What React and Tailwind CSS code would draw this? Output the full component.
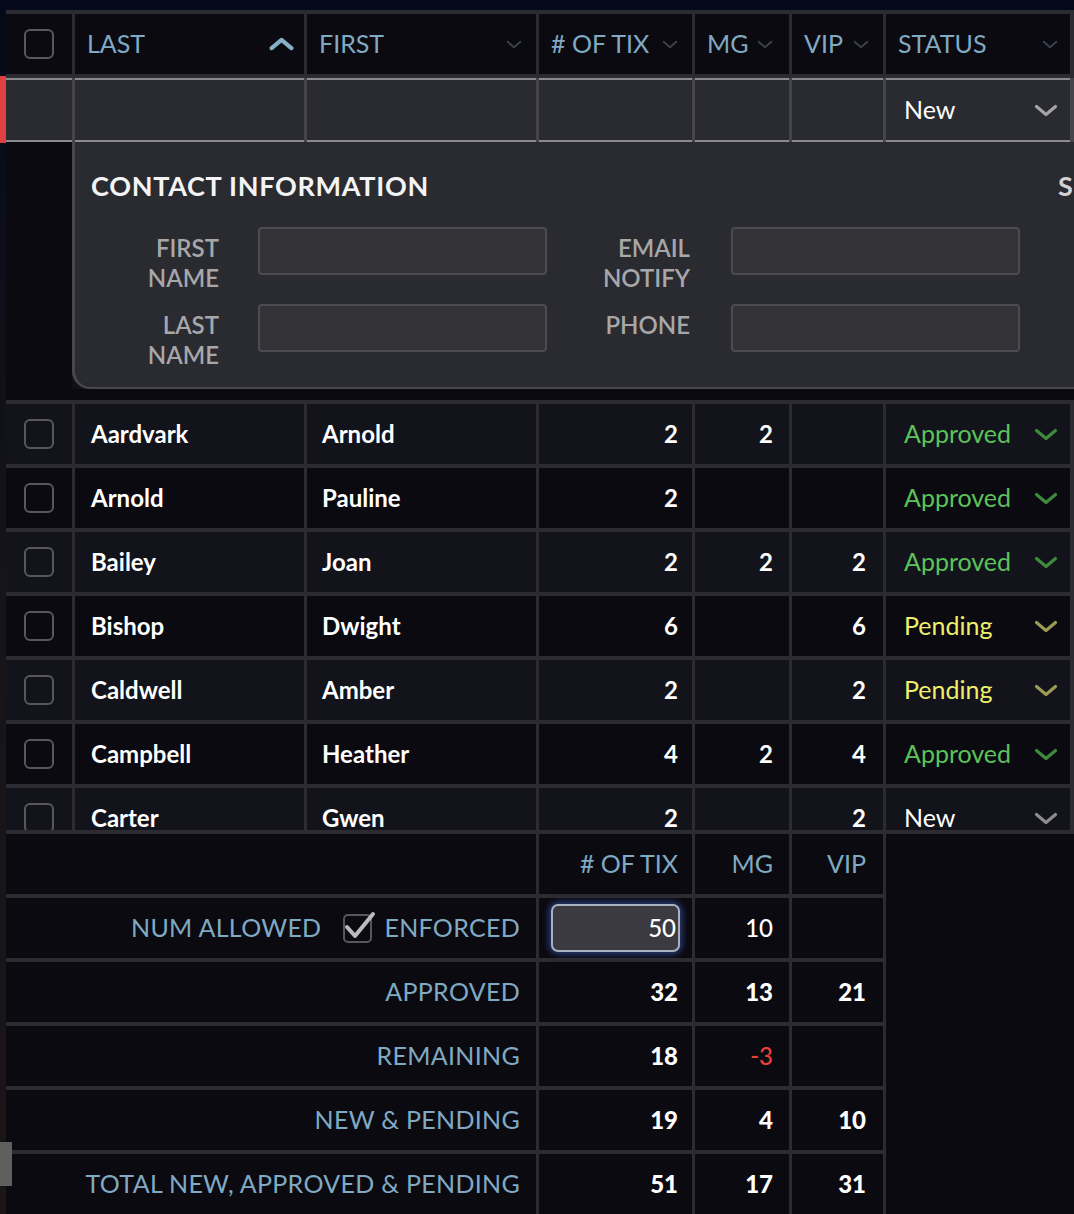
import React from 'react'

const GRID = 'grid grid-cols-[66px_229px_229px_153px_94px_91px_184px] gap-x-[3px]'

const rows = [
  { last: 'Aardvark', first: 'Arnold', tix: 2, mg: 2, vip: '', status: 'Approved' },
  { last: 'Arnold', first: 'Pauline', tix: 2, mg: '', vip: '', status: 'Approved' },
  { last: 'Bailey', first: 'Joan', tix: 2, mg: 2, vip: 2, status: 'Approved' },
  { last: 'Bishop', first: 'Dwight', tix: 6, mg: '', vip: 6, status: 'Pending' },
  { last: 'Caldwell', first: 'Amber', tix: 2, mg: '', vip: 2, status: 'Pending' },
  { last: 'Campbell', first: 'Heather', tix: 4, mg: 2, vip: 4, status: 'Approved' },
  { last: 'Carter', first: 'Gwen', tix: 2, mg: '', vip: 2, status: 'New' },
]

const statusStyle = {
  Approved: { text: 'text-[#5cc35a]', chev: '#3e8b3f' },
  Pending: { text: 'text-[#eef06c]', chev: '#9c9a55' },
  New: { text: 'text-white', chev: '#8d8d8d' },
}

function Chevron({ color, up = false, w = 24, h = 13, sw = 3.2 }) {
  return (
    <svg width={w} height={h} viewBox="0 0 24 13" fill="none" stroke={color} strokeWidth={sw} strokeLinecap="round" strokeLinejoin="round">
      <polyline points={up ? '2.5,10.5 12,2.5 21.5,10.5' : '2.5,2.5 12,10.5 21.5,2.5'} />
    </svg>
  )
}

const Box = () => <div className="h-[30px] w-[30px] rounded-[6px] border-2 border-[#57575d]" />

function HeadCell({ label, up, className = '' }) {
  return (
    <div className={`flex h-[60px] items-center justify-between bg-[#0b0a11] pl-[12px] text-[25px] text-[#80a9c2] ${className}`}>
      <span>{label}</span>
      {up ? <Chevron color="#86aec6" up w={25} h={14} sw={4} /> : <Chevron color="#3a404e" w={16} h={9} sw={3} />}
    </div>
  )
}

function FieldRow({ a, b }) {
  return (
    <div className="flex items-start">
      <div className="mt-[6px] w-[128px] text-right text-[24px] font-semibold leading-[30px] text-[#a7a7a9]">
        {a.map(l => <div key={l}>{l}</div>)}
      </div>
      <div className="ml-[39px] h-[48px] w-[289px] rounded-[4px] border-2 border-[#4b4b51] bg-[#323237]" />
      <div className="mt-[6px] w-[143px] text-right text-[24px] font-semibold leading-[30px] text-[#a7a7a9]">
        {b.map(l => <div key={l}>{l}</div>)}
      </div>
      <div className="ml-[41px] h-[48px] w-[289px] rounded-[4px] border-2 border-[#4b4b51] bg-[#323237]" />
    </div>
  )
}

const footRows = [
  { label: 'APPROVED', tix: '32', mg: '13', vip: '21' },
  { label: 'REMAINING', tix: '18', mg: '-3', vip: '' },
  { label: 'NEW & PENDING', tix: '19', mg: '4', vip: '10' },
  { label: 'TOTAL NEW, APPROVED & PENDING', tix: '51', mg: '17', vip: '31' },
]

const footLabel = 'flex h-[60px] items-center justify-end bg-[#0b0a11] pr-[16px] text-[25px] tracking-[0.3px] text-[#80a9c2]'

export default function App() {
  return (
    <div className="relative h-[1214px] w-[1074px] overflow-hidden bg-linear-to-b from-[#050a1a] via-[#171419] via-50% to-[#1b1518] pl-[6px] pt-[10px] font-['Lato',sans-serif]">
      {/* header */}
      <div className={`${GRID} border-y-4 border-[#2c2b31] bg-[#2c2b31] pr-[4px]`}>
        <div className="flex h-[60px] items-center justify-center bg-[#0b0a11]"><Box /></div>
        <HeadCell label="LAST" up className="pr-[10px]" />
        <HeadCell label="FIRST" className="pr-[14px]" />
        <HeadCell label="# OF TIX" className="pr-[14px]" />
        <HeadCell label="MG" className="pr-[16px]" />
        <HeadCell label="VIP" className="pr-[14px]" />
        <HeadCell label="STATUS" className="pl-[10px] pr-[12px]" />
      </div>

      {/* scroll area */}
      <div className="h-[752px] overflow-hidden">
        {/* selected row */}
        <div className={`${GRID} bg-[#45454b] pr-[4px]`}>
          {[0, 1, 2, 3, 4, 5].map(i => (
            <div key={i} className="h-[64px] border-y-2 border-[#8a8a8f] bg-[#2a2a31]" />
          ))}
          <div className="flex h-[64px] items-center justify-between border-y-2 border-[#8a8a8f] bg-[#2a2a31] pl-[18px] pr-[12px]">
            <span className="text-[25px] text-white">New</span>
            <Chevron color="#a5a5a5" />
          </div>
        </div>

        {/* contact panel */}
        <div className="flex">
          <div className="w-[66px] shrink-0 bg-[#0b0a11]" />
          <div className="flex h-[247px] min-w-0 flex-1 overflow-hidden rounded-bl-[18px] border-b-2 border-l-[3px] border-[#47474d] bg-[#2a2a31] pl-[16px] pt-[30px]">
            <div className="w-[929px] shrink-0">
              <h2 className="text-[27px] font-bold leading-none tracking-[0.7px] text-[#f4f4f4]">CONTACT INFORMATION</h2>
              <div className="mt-[28px] flex flex-col gap-[11px]">
                <FieldRow a={['FIRST', 'NAME']} b={['EMAIL', 'NOTIFY']} />
                <FieldRow a={['LAST', 'NAME']} b={['PHONE']} />
              </div>
            </div>
            <h2 className="ml-[38px] shrink-0 text-[27px] font-bold leading-none tracking-[0.7px] text-[#d2d2d4]">SETTINGS</h2>
          </div>
        </div>
        <div className="h-[11px] bg-[#0b0a11]" />

        {/* rows */}
        <div className="flex h-[430px] flex-col gap-[4px] overflow-hidden border-t-4 border-[#2c2b31] bg-[#2c2b31]">
          {rows.map((r, i) => {
            const bg = i % 2 === 0 ? 'bg-[#13131b]' : 'bg-[#0b0a11]'
            const st = statusStyle[r.status]
            return (
              <div key={r.last} className={`${GRID} shrink-0 pr-[4px] text-[24px] text-white`}>
                <div className={`flex h-[60px] items-center justify-center ${bg}`}><Box /></div>
                <div className={`flex h-[60px] items-center pl-[16px] font-bold ${bg}`}>{r.last}</div>
                <div className={`flex h-[60px] items-center pl-[15px] font-bold ${bg}`}>{r.first}</div>
                <div className={`flex h-[60px] items-center justify-end pr-[14px] font-bold ${bg}`}>{r.tix}</div>
                <div className={`flex h-[60px] items-center justify-end pr-[16px] font-bold ${bg}`}>{r.mg}</div>
                <div className={`flex h-[60px] items-center justify-end pr-[17px] font-bold ${bg}`}>{r.vip}</div>
                <div className={`flex h-[60px] items-center justify-between pl-[18px] pr-[12px] ${bg}`}>
                  <span className={`text-[25px] ${st.text}`}>{r.status}</span>
                  <Chevron color={st.chev} />
                </div>
              </div>
            )
          })}
        </div>
      </div>

      {/* totals */}
      <div className="flex border-t-4 border-[#2c2b31]">
        <div className="grid grid-cols-[530px_153px_94px_91px] gap-x-[3px] gap-y-[4px] bg-[#2c2b31] pr-[3px] text-[24px]">
          <div className="h-[60px] bg-[#0b0a11]" />
          <div className="flex h-[60px] items-center justify-end bg-[#0b0a11] pr-[14px] text-[25px] text-[#80a9c2]"># OF TIX</div>
          <div className="flex h-[60px] items-center justify-end bg-[#0b0a11] pr-[16px] text-[25px] text-[#80a9c2]">MG</div>
          <div className="flex h-[60px] items-center justify-end bg-[#0b0a11] pr-[17px] text-[25px] text-[#80a9c2]">VIP</div>

          <div className={footLabel}>
            <span>NUM ALLOWED</span>
            <div className="relative ml-[22px] h-[29px] w-[29px] rounded-[5px] border-2 border-[#56565c]">
              <svg className="absolute -right-[7px] -top-[5px]" width="34" height="30" viewBox="0 0 34 30" fill="none" stroke="#bcbcbc" strokeWidth="4" strokeLinecap="round" strokeLinejoin="round">
                <polyline points="4,16 12,25 30,3" />
              </svg>
            </div>
            <span className="ml-[12px]">ENFORCED</span>
          </div>
          <div className="flex h-[60px] items-center bg-[#0b0a11] px-[12px]">
            <div className="flex h-[48px] w-full items-center justify-end rounded-[7px] border-2 border-[#a9b0c0] bg-[#3b3a41] pr-[2px] font-medium text-white shadow-[0_0_6px_2px_rgba(70,110,210,0.55)]">50</div>
          </div>
          <div className="flex h-[60px] items-center justify-end bg-[#0b0a11] pr-[16px] font-medium text-white">10</div>
          <div className="h-[60px] bg-[#0b0a11]" />

          {footRows.map(f => (
            <React.Fragment key={f.label}>
              <div className={footLabel}>{f.label}</div>
              <div className="flex h-[60px] items-center justify-end bg-[#0b0a11] pr-[14px] font-black text-white">{f.tix}</div>
              <div className={`flex h-[60px] items-center justify-end bg-[#0b0a11] pr-[16px] ${f.mg.startsWith('-') ? 'font-medium text-[#e8413c]' : 'font-black text-white'}`}>{f.mg}</div>
              <div className="flex h-[60px] items-center justify-end bg-[#0b0a11] pr-[17px] font-black text-white">{f.vip}</div>
            </React.Fragment>
          ))}
        </div>
        <div className="flex-1 bg-[#0b0a11]" />
      </div>

      {/* selected-row marker and scrollbar thumb */}
      <div className="absolute left-0 top-[76px] h-[67px] w-[6px] bg-[#e0403f]" />
      <div className="absolute left-0 top-[1142px] h-[44px] w-[12px] bg-[#5f5f5f]" />
    </div>
  )
}
